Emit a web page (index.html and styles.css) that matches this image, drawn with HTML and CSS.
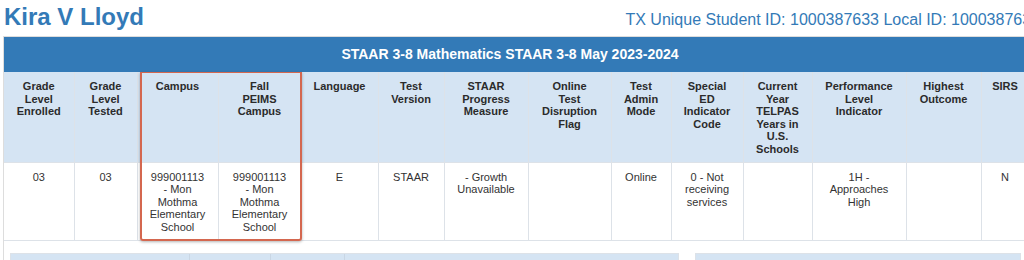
FILE: index.html
```html
<!DOCTYPE html>
<html>
<head>
<meta charset="utf-8">
<link rel="stylesheet" href="styles.css">
</head>
<body>
<div class="page">
  <header class="student-head">
    <h1 class="student-name">Kira V Lloyd</h1>
    <div class="student-ids">TX Unique Student ID: 1000387633 Local ID: 1000387633</div>
  </header>
  <section class="panel">
    <div class="panel-heading">STAAR 3-8 Mathematics STAAR 3-8 May 2023-2024</div>
    <div class="table-wrap">
      <table class="results">
        <colgroup>
          <col class="c71"><col class="c63"><col class="c81"><col class="c83"><col class="c77"><col class="c66"><col class="c84"><col class="c83"><col class="c60"><col class="c72"><col class="c69"><col class="c94"><col class="c75"><col class="c47">
        </colgroup>
        <thead>
          <tr>
            <th>Grade<br>Level<br>Enrolled</th>
            <th>Grade<br>Level<br>Tested</th>
            <th>Campus</th>
            <th>Fall<br>PEIMS<br>Campus</th>
            <th>Language</th>
            <th>Test<br>Version</th>
            <th>STAAR<br>Progress<br>Measure</th>
            <th>Online<br>Test<br>Disruption<br>Flag</th>
            <th>Test<br>Admin<br>Mode</th>
            <th>Special<br>ED<br>Indicator<br>Code</th>
            <th>Current<br>Year<br>TELPAS<br>Years in<br>U.S.<br>Schools</th>
            <th>Performance<br>Level<br>Indicator</th>
            <th>Highest<br>Outcome</th>
            <th>SIRS</th>
          </tr>
        </thead>
        <tbody>
          <tr>
            <td>03</td>
            <td>03</td>
            <td>999001113<br>- Mon<br>Mothma<br>Elementary<br>School</td>
            <td>999001113<br>- Mon<br>Mothma<br>Elementary<br>School</td>
            <td>E</td>
            <td>STAAR</td>
            <td>- Growth<br>Unavailable</td>
            <td></td>
            <td>Online</td>
            <td>0 - Not<br>receiving<br>services</td>
            <td></td>
            <td>1H -<br>Approaches<br>High</td>
            <td></td>
            <td>N</td>
          </tr>
        </tbody>
      </table>
      <div class="highlight"></div>
    </div>
    <div class="panel-body">
      <div class="sub-box sub-left">
        <div class="sub-cell w179"></div>
        <div class="sub-cell w81"></div>
        <div class="sub-cell w74"></div>
        <div class="sub-cell grow"></div>
      </div>
      <div class="sub-box sub-right"></div>
    </div>
  </section>
</div>
</body>
</html>
```

FILE: styles.css
```css
* { box-sizing: border-box; }
html, body {
  margin: 0;
  padding: 0;
  background: #fff;
  overflow: hidden;
}
body {
  font-family: "Liberation Sans", Arial, sans-serif;
  color: #333;
}
.page {
  width: 1040px;
  padding-left: 3px;
}
.student-head {
  display: flex;
  align-items: baseline;
  height: 36px;
  padding-top: 3px;
}
.student-name {
  margin: 0 0 0 1px;
  font-size: 24px;
  line-height: 28px;
  font-weight: bold;
  color: #337ab7;
  flex: none;
}
.student-ids {
  margin-left: auto;
  font-size: 16px;
  color: #337ab7;
  white-space: nowrap;
}
.panel {
  width: 1025px;
  border: 1px solid #ddd;
  border-right: none;
  border-bottom: none;
}
.panel-heading {
  background: #337ab7;
  color: #fff;
  font-weight: bold;
  font-size: 14px;
  height: 35px;
  line-height: 35px;
  text-align: center;
  padding-right: 12px;
}
.table-wrap {
  position: relative;
}
.results {
  border-collapse: collapse;
  table-layout: fixed;
  width: 1024px;
  font-size: 11px;
}
.c71 { width: 70px; }
.c63 { width: 63px; }
.c81 { width: 81px; }
.c83 { width: 83px; }
.c77 { width: 77px; }
.c66 { width: 66px; }
.c84 { width: 84px; }
.c60 { width: 60px; }
.c72 { width: 72px; }
.c69 { width: 69px; }
.c94 { width: 94px; }
.c75 { width: 75px; }
.c47 { width: 48px; }
.results th,
.results td {
  border: 1px solid #dde2e8;
  text-align: center;
  vertical-align: top;
  line-height: 12.6px;
  padding: 8px 2px 6px;
  white-space: nowrap;
}
.results tr > :first-child { border-left: none; }
.results thead tr > * { border-top: none; }
.results th {
  background: #d5e4f3;
  font-weight: bold;
  color: #2b2b2b;
  height: 90px;
}
.results td {
  color: #333;
  height: 77px;
}
.highlight {
  position: absolute;
  left: 136px;
  top: 0;
  width: 162px;
  height: 169px;
  border: 2px solid #d4674f;
  border-top-width: 1px;
  border-radius: 0 0 3px 3px;
  box-shadow: 0 1px 3px rgba(0, 0, 0, 0.3);
  pointer-events: none;
}
.panel-body {
  display: flex;
  gap: 16px;
  padding: 12px 7px 0 6px;
}
.sub-box {
  height: 30px;
  background: #d5e4f3;
  border: 1px solid #dde2e8;
}
.sub-left {
  width: 670px;
  display: flex;
}
.sub-right {
  width: 326px;
}
.sub-cell {
  height: 100%;
  border-right: 1px solid #c9d6e4;
}
.sub-cell.grow { flex: 1; border-right: none; }
.w179 { width: 179px; }
.w81 { width: 81px; }
.w74 { width: 74px; }
```
